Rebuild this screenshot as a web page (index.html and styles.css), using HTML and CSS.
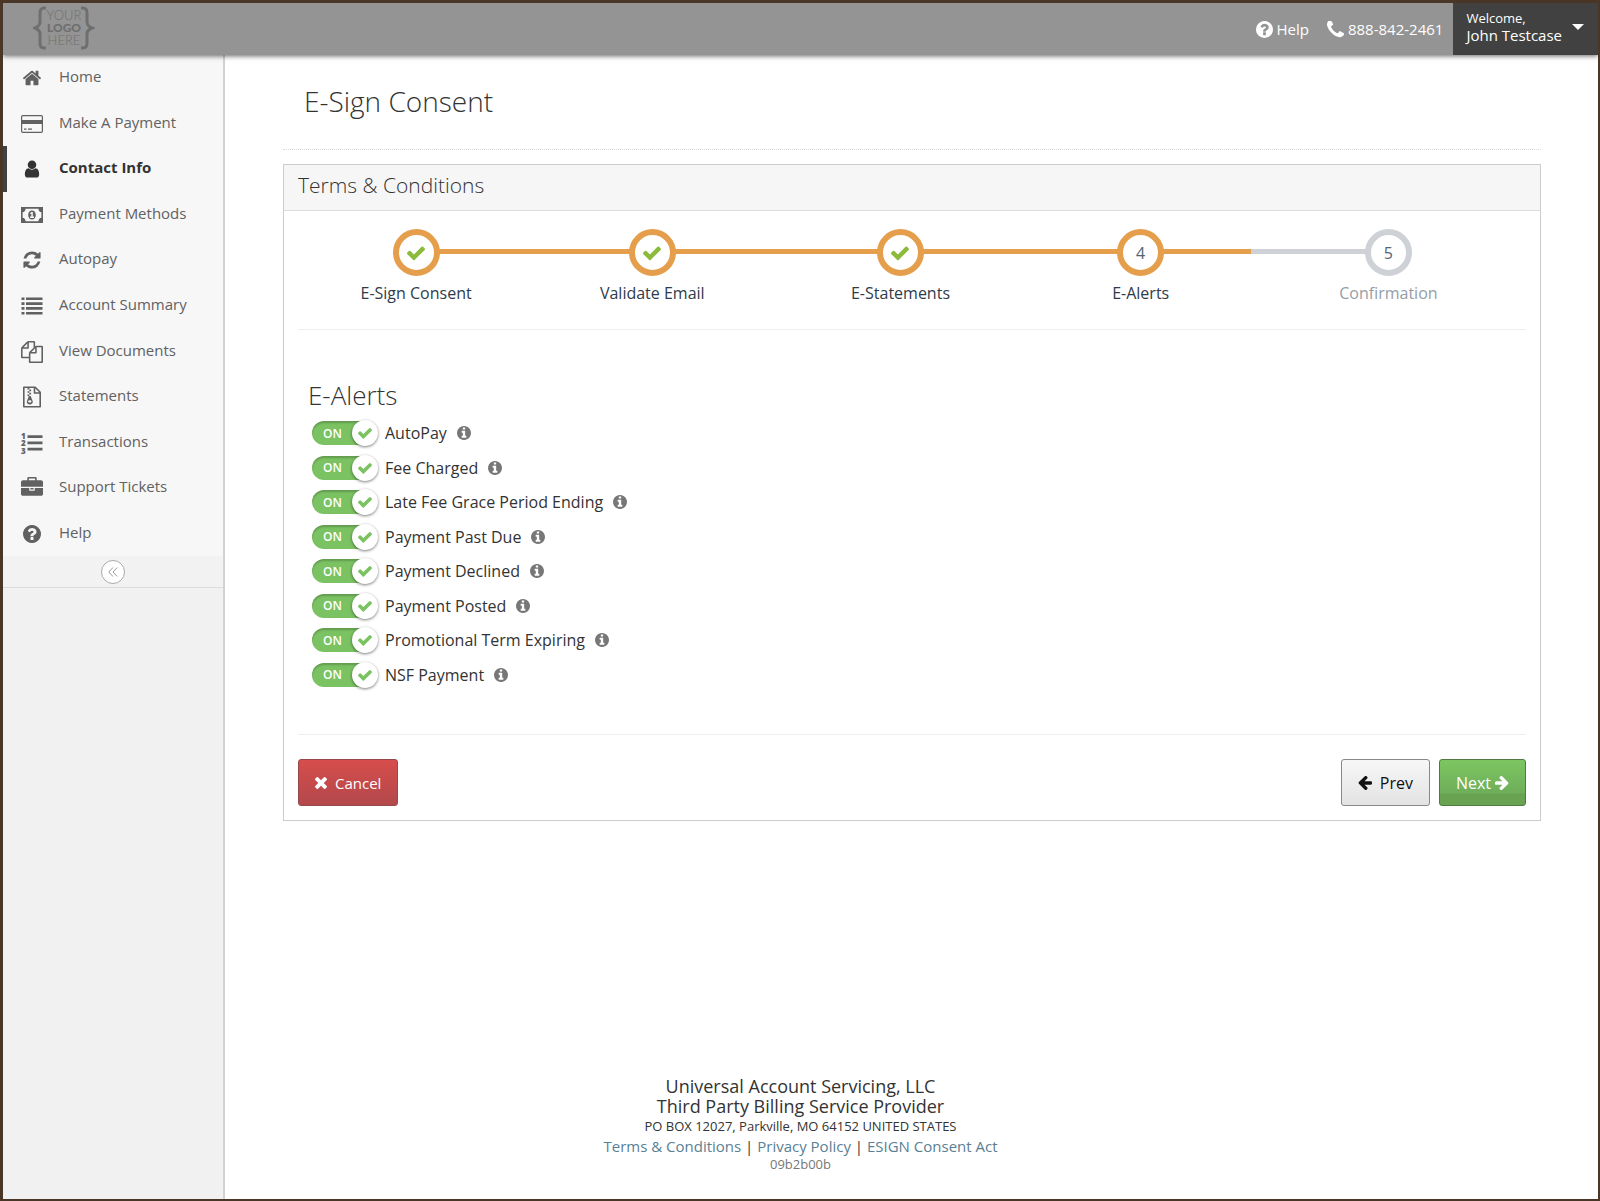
FILE: index.html
```html
<!DOCTYPE html>
<html lang="en">
<head>
  <meta charset="UTF-8">
  <meta name="viewport" content="width=device-width, initial-scale=1.0">
  <title>E-Sign Consent</title>
  <link rel="stylesheet" href="styles.css">
</head>
<body>
  <!-- icon sprite -->
  <svg class="sprite" aria-hidden="true">
    <symbol id="i-home" viewBox="0 0 1792 1792"><path d="M1472 992v480q0 26-19 45t-45 19h-384v-384h-256v384h-384q-26 0-45-19t-19-45v-480q0-1 .5-3t.5-3l575-474 575 474q1 2 1 6zm223-69l-62 74q-8 9-21 11h-3q-13 0-21-7l-692-577-692 577q-12 8-24 7-13-2-21-11l-62-74q-8-10-7-23.5t11-21.5l719-599q32-26 76-26t76 26l244 204v-195q0-14 9-23t23-9h192q14 0 23 9t9 23v408l219 182q10 8 11 21.5t-7 23.5z"/></symbol>
    <symbol id="i-card" viewBox="0 0 24 24"><rect x="1.6" y="3.6" width="20.8" height="16.8" rx="1.2" fill="none" stroke="currentColor" stroke-width="1.2"/><path d="M1 8h22v4H1zM4 16.5h2.5v1.3H4zM8 16.5h4v1.3H8z"/></symbol>
    <symbol id="i-user" viewBox="0 0 1792 1792"><path d="M1536 1399q0 109-62.5 187t-150.5 78h-854q-88 0-150.5-78t-62.5-187q0-85 8.500-160.500t31.500-152 58.500-131 94-89 134.500-34.500q131 128 313 128t313-128q76 0 134.500 34.500t94 89 58.500 131 31.500 152 8.500 160.500zm-256-887q0 159-112.500 271.500t-271.500 112.500-271.500-112.500-112.500-271.500 112.500-271.500 271.500-112.500 271.500 112.500 112.500 271.500z"/></symbol>
    <symbol id="i-money" viewBox="0 0 24 24"><path fill-rule="evenodd" d="M1 4h22v16H1zM5.600 5.700Q5.200 8.800 2.600 9.200V14.800Q5.200 15.200 5.600 18.300H18.400Q18.800 15.200 21.400 14.800V9.200Q18.800 8.800 18.400 5.700z"/><path fill-rule="evenodd" d="M12 7.500c2.400 0 3.800 2 3.800 4.500s-1.400 4.500-3.800 4.500-3.800-2-3.800-4.500 1.400-4.500 3.800-4.500zM11.400 9L9.900 10.300l.7.800.7-.5v3h-1.200V15h3.900v-1.400h-1.200V9z"/></symbol>
    <symbol id="i-refresh" viewBox="0 0 1792 1792"><path d="M1639 1056q0 5-1 7-64 268-268 434.500t-478 166.500q-146 0-282.500-55t-243.500-157l-129 129q-19 19-45 19t-45-19-19-45v-448q0-26 19-45t45-19h448q26 0 45 19t19 45-19 45l-137 137q71 66 161 102t187 36q134 0 250-65t186-179q11-17 53-117 8-23 30-23h192q13 0 22.500 9.500t9.500 22.500zm25-800v448q0 26-19 45t-45 19h-448q-26 0-45-19t-19-45 19-45l138-138q-148-137-349-137-134 0-250 65t-186 179q-11 17-53 117-8 23-30 23h-199q-13 0-22.500-9.500t-9.500-22.500v-7q65-268 270-434.500t480-166.500q146 0 284 55.500t245 156.500l130-129q19-19 45-19t45 19 19 45z"/></symbol>
    <symbol id="i-list" viewBox="0 0 24 24"><path d="M1.500 3.500h3v2.600h-3zM6 3.500h16.500v2.600H6zM1.500 8.300h3v2.600h-3zM6 8.300h16.500v2.600H6zM1.500 13.100h3v2.600h-3zM6 13.100h16.500v2.600H6zM1.500 17.900h3v2.600h-3zM6 17.900h16.500v2.600H6z"/></symbol>
    <symbol id="i-files" viewBox="0 0 1792 1792"><path d="M1696 384q40 0 68 28t28 68v1216q0 40-28 68t-68 28h-960q-40 0-68-28t-28-68v-288h-544q-40 0-68-28t-28-68v-672q0-40 20-88t48-76l408-408q28-28 76-48t88-20h416q40 0 68 28t28 68v328q68-40 128-40h416zm-544 213l-299 299h299v-299zm-640-384l-299 299h299v-299zm196 647l316-316v-416h-384v416q0 40-28 68t-68 28h-416v640h512v-256q0-40 20-88t48-76zm956 804v-1152h-384v416q0 40-28 68t-68 28h-416v640h896z"/></symbol>
    <symbol id="i-zip" viewBox="0 0 24 24"><path fill="none" stroke="currentColor" stroke-width="1.600" stroke-linejoin="round" d="M3.800 2.300h11.400l5 5v14.400H3.800zM14.500 2.500v5.500h5.500"/><path fill-rule="evenodd" d="M7.500 3h1.800v1.600H7.500zM9.300 4.600h1.800v1.600H9.300zM7.500 6.200h1.800v1.600H7.500zM9.300 7.800h1.800v1.600H9.300zM7.500 9.400h1.800V11H7.500zM8.800 11h1.900l2 5.200c.6 1.900-1 3.200-2.900 3.200s-3.500-1.300-2.900-3.200zM9.800 15.300c-1 0-1.700.5-1.700 1.100s.7 1.100 1.700 1.100 1.700-.5 1.700-1.100-.7-1.100-1.700-1.100z"/></symbol>
    <symbol id="i-ol" viewBox="0 0 24 24"><path d="M7.500 4.200h15v2.700h-15zM7.500 10.500h15v2.700h-15zM7.500 16.800h15v2.700h-15z"/><g class="ol-num"><text x="1" y="7.500">1</text><text x="1" y="15">2</text><text x="1" y="22.500">3</text></g></symbol>
    <symbol id="i-briefcase" viewBox="0 0 1792 1792"><path d="M640 256h512v-128h-512v128zm1152 640v480q0 66-47 113t-113 47h-1472q-66 0-113-47t-47-113v-480h672v160q0 26 19 45t45 19h320q26 0 45-19t19-45v-160h672zm-768 0v128h-256v-128h256zm768-480v384h-1792v-384q0-66 47-113t113-47h352v-160q0-40 28-68t68-28h576q40 0 68 28t28 68v160h352q66 0 113 47t47 113z"/></symbol>
    <symbol id="i-question" viewBox="128 128 1536 1536"><path d="M1024 1376v-192q0-14-9-23t-23-9h-192q-14 0-23 9t-9 23v192q0 14 9 23t23 9h192q14 0 23-9t9-23zm256-672q0-88-55.500-163t-138.500-116-170-41q-243 0-371 213-15 24 8 42l132 100q7 6 19 6 16 0 25-12 53-68 86-92 34-24 86-24 48 0 85.500 26t37.500 59q0 38-20 61t-68 45q-63 28-115.500 86.500t-52.500 125.500v36q0 14 9 23t23 9h192q14 0 23-9t9-23q0-19 21.500-49.500t54.500-49.500q32-18 49-28.500t46-35 44.500-48 28-60.500 12.500-81zm384 192q0 209-103 385.500t-279.500 279.500-385.500 103-385.500-103-279.500-279.500-103-385.500 103-385.500 279.500-279.500 385.500-103 385.500 103 279.500 279.500 103 385.500z"/></symbol>
    <symbol id="i-info" viewBox="128 128 1536 1536"><path d="M1152 1376v-160q0-14-9-23t-23-9h-96v-512q0-14-9-23t-23-9h-320q-14 0-23 9t-9 23v160q0 14 9 23t23 9h96v320h-96q-14 0-23 9t-9 23v160q0 14 9 23t23 9h448q14 0 23-9t9-23zm-128-896v-160q0-14-9-23t-23-9h-192q-14 0-23 9t-9 23v160q0 14 9 23t23 9h192q14 0 23-9t9-23zm640 416q0 209-103 385.500t-279.500 279.500-385.500 103-385.500-103-279.500-279.500-103-385.500 103-385.500 279.500-279.500 385.500-103 385.500 103 279.500 279.500 103 385.500z"/></symbol>
    <symbol id="i-phone" viewBox="192 192 1408 1408"><path d="M1600 1240q0 27-10 70.500t-21 68.500q-21 50-122 106-94 51-186 51-27 0-52.500-3.500t-57.500-12.500-47.500-14.500-55.500-20.500-49-18q-98-35-175-83-128-79-264.500-215.500t-215.500-264.500q-48-77-83-175-3-9-18-49t-20.500-55.500-14.500-47.500-12.500-57.500-3.500-52.500q0-92 51-186 56-101 106-122 25-11 68.500-21t70.500-10q14 0 21 3 18 6 53 76 11 19 30 54t35 63.500 31 53.500q3 4 17.500 25t21.500 35.500 7 28.500q0 20-28.500 50t-62 55-62 53-28.500 46q0 9 5 22.500t8.500 20.500 14 24 11.500 19q76 137 174 235t235 174q2 1 19 11.500t24 14 20.500 8.500 22.500 5q18 0 46-28.500t53-62 55-62 50-28.500q14 0 28.500 7t35.500 21.500 25 17.500q25 15 53.500 31t63.500 35 54 30q70 35 76 53 3 7 3 21z"/></symbol>
    <symbol id="i-check" viewBox="121 121 1550 1550"><path d="M1671 566q0 40-28 68l-724 724-136 136q-28 28-68 28t-68-28l-136-136-362-362q-28-28-28-68t28-68l136-136q28-28 68-28t68 28l294 295 656-657q28-28 68-28t68 28l136 136q28 28 28 68z"/></symbol>
    <symbol id="i-times" viewBox="302 366 1188 1188"><path d="M1490 1322q0 40-28 68l-136 136q-28 28-68 28t-68-28l-294-294-294 294q-28 28-68 28t-68-28l-136-136q-28-28-28-68t28-68l294-294-294-294q-28-28-28-68t28-68l136-136q28-28 68-28t68 28l294 294 294-294q28-28 68-28t68 28l136 136q28 28 28 68t-28 68l-294 294 294 294q28 28 28 68z"/></symbol>
    <symbol id="i-arrow" viewBox="128 200 1536 1536"><path d="M1664 896v128q0 53-32.500 90.500t-84.500 37.500h-704l293 294q38 36 38 90t-38 90l-75 76q-37 37-90 37-52 0-91-37l-651-652q-37-37-37-90 0-52 37-91l651-650q38-38 91-38 52 0 90 38l75 74q38 38 38 91t-38 91l-293 293h704q52 0 84.500 37.500t32.500 90.500z"/></symbol>
  </svg>

  <header class="topbar">
    <a class="logo" href="#" aria-label="Home page">
      <svg width="62" height="44" viewBox="0 0 62 44">
        <path class="brace" d="M13 2H11Q7 2 7 7V16Q7 20 2 22Q7 24 7 28V37Q7 42 11 42H13M48 2H50Q54 2 54 7V16Q54 20 59 22Q54 24 54 28V37Q54 42 50 42H48"/>
        <text class="logo-thin" x="31" y="14">YOUR</text>
        <text class="logo-bold" x="31" y="26">LOGO</text>
        <text class="logo-thin" x="31" y="39">HERE</text>
      </svg>
    </a>
    <div class="topbar-right">
      <a class="top-link" href="#"><svg class="icon"><use href="#i-question"/></svg>Help</a>
      <a class="top-link" href="#"><svg class="icon phone"><use href="#i-phone"/></svg>888-842-2461</a>
      <button class="user-menu" type="button">
        <span class="user-name"><small>Welcome,</small>John Testcase</span>
        <span class="caret"></span>
      </button>
    </div>
  </header>

  <div class="page">
    <aside class="sidebar">
      <nav class="menu">
        <a href="#"><svg class="medium"><use href="#i-home"/></svg>Home</a>
        <a href="#"><svg><use href="#i-card"/></svg>Make A Payment</a>
        <a href="#" class="active"><svg class="medium"><use href="#i-user"/></svg>Contact Info</a>
        <a href="#"><svg><use href="#i-money"/></svg>Payment Methods</a>
        <a href="#"><svg class="medium"><use href="#i-refresh"/></svg>Autopay</a>
        <a href="#"><svg><use href="#i-list"/></svg>Account Summary</a>
        <a href="#"><svg class="small"><use href="#i-files"/></svg>View Documents</a>
        <a href="#"><svg><use href="#i-zip"/></svg>Statements</a>
        <a href="#"><svg><use href="#i-ol"/></svg>Transactions</a>
        <a href="#"><svg class="small"><use href="#i-briefcase"/></svg>Support Tickets</a>
        <a href="#"><svg class="round"><use href="#i-question"/></svg>Help</a>
      </nav>
      <div class="collapse-bar">
        <button class="collapse" type="button" aria-label="Collapse menu">
          <svg width="10" height="10" viewBox="0 0 10 10"><path d="M5 .5L.8 5 5 9.500M9.200 .5L5 5l4.200 4.500"/></svg>
        </button>
      </div>
    </aside>

    <main class="content">
      <h1>E-Sign Consent</h1>

      <section class="panel">
        <h2 class="panel-title">Terms &amp; Conditions</h2>
        <div class="panel-body">
          <ol class="steps">
            <li class="done"><span class="step"><svg><use href="#i-check"/></svg></span>E-Sign Consent</li>
            <li class="done"><span class="step"><svg><use href="#i-check"/></svg></span>Validate Email</li>
            <li class="done"><span class="step"><svg><use href="#i-check"/></svg></span>E-Statements</li>
            <li class="done"><span class="step">4</span>E-Alerts</li>
            <li><span class="step">5</span>Confirmation</li>
          </ol>

          <form class="alerts">
            <h3>E-Alerts</h3>
            <div class="alert-list">
              <div class="alert-row">
                <span class="switch"><input type="checkbox" id="autopay" checked><span class="on">ON</span><span class="knob"><svg><use href="#i-check"/></svg></span></span>
                <label for="autopay">AutoPay</label><svg class="info"><use href="#i-info"/></svg>
              </div>
              <div class="alert-row">
                <span class="switch"><input type="checkbox" id="fee" checked><span class="on">ON</span><span class="knob"><svg><use href="#i-check"/></svg></span></span>
                <label for="fee">Fee Charged</label><svg class="info"><use href="#i-info"/></svg>
              </div>
              <div class="alert-row">
                <span class="switch"><input type="checkbox" id="grace" checked><span class="on">ON</span><span class="knob"><svg><use href="#i-check"/></svg></span></span>
                <label for="grace">Late Fee Grace Period Ending</label><svg class="info"><use href="#i-info"/></svg>
              </div>
              <div class="alert-row">
                <span class="switch"><input type="checkbox" id="pastdue" checked><span class="on">ON</span><span class="knob"><svg><use href="#i-check"/></svg></span></span>
                <label for="pastdue">Payment Past Due</label><svg class="info"><use href="#i-info"/></svg>
              </div>
              <div class="alert-row">
                <span class="switch"><input type="checkbox" id="declined" checked><span class="on">ON</span><span class="knob"><svg><use href="#i-check"/></svg></span></span>
                <label for="declined">Payment Declined</label><svg class="info"><use href="#i-info"/></svg>
              </div>
              <div class="alert-row">
                <span class="switch"><input type="checkbox" id="posted" checked><span class="on">ON</span><span class="knob"><svg><use href="#i-check"/></svg></span></span>
                <label for="posted">Payment Posted</label><svg class="info"><use href="#i-info"/></svg>
              </div>
              <div class="alert-row">
                <span class="switch"><input type="checkbox" id="promo" checked><span class="on">ON</span><span class="knob"><svg><use href="#i-check"/></svg></span></span>
                <label for="promo">Promotional Term Expiring</label><svg class="info"><use href="#i-info"/></svg>
              </div>
              <div class="alert-row">
                <span class="switch"><input type="checkbox" id="nsf" checked><span class="on">ON</span><span class="knob"><svg><use href="#i-check"/></svg></span></span>
                <label for="nsf">NSF Payment</label><svg class="info"><use href="#i-info"/></svg>
              </div>
            </div>
          </form>

          <div class="actions">
            <button class="btn cancel" type="button"><svg><use href="#i-times"/></svg>Cancel</button>
            <button class="btn prev" type="button"><svg><use href="#i-arrow"/></svg>Prev</button>
            <button class="btn next" type="button">Next<svg><use href="#i-arrow"/></svg></button>
          </div>
        </div>
      </section>
    </main>

    <footer class="footer">
      <p class="company">Universal Account Servicing, LLC<br>Third Party Billing Service Provider</p>
      <p class="address">PO BOX 12027, Parkville, MO 64152 UNITED STATES</p>
      <p class="links"><a href="#">Terms &amp; Conditions</a> | <a href="#">Privacy Policy</a> | <a href="#">ESIGN Consent Act</a></p>
      <p class="build">09b2b00b</p>
    </footer>
  </div>
</body>
</html>
```
FILE: styles.css
```css
* {
  box-sizing: border-box;
}

body {
  margin: 0;
  min-height: 100vh;
  display: flex;
  flex-direction: column;
  border: 2px solid #4a3627;
  border-top-width: 3px;
  border-left-width: 3px;
  font-family: "Open Sans", "Noto Sans", sans-serif;
  font-size: 16px;
  color: #333;
  background: #fff;
}

h1, h2, h3, p, ol {
  margin: 0;
  padding: 0;
  font-weight: 300;
}

a {
  color: inherit;
  text-decoration: none;
}

button {
  font-family: inherit;
  cursor: pointer;
}

svg {
  fill: currentColor;
  flex: none;
}

.sprite {
  display: none;
}

/* top bar */
.topbar {
  position: relative;
  z-index: 2;
  height: 52px;
  display: flex;
  justify-content: space-between;
  background: #949494;
  box-shadow: 0 1px 5px rgba(0, 0, 0, 0.6);
}

.logo {
  padding: 3px 0 0 30px;
  color: #6f6f6f;
}

.brace {
  fill: none;
  stroke: currentColor;
  stroke-width: 3;
}

.logo-thin,
.logo-bold {
  font-family: Lato, sans-serif;
  font-size: 13px;
  font-weight: 300;
  text-anchor: middle;
}

.logo-bold {
  font-size: 12px;
  font-weight: 900;
}

.topbar-right {
  display: flex;
  align-items: center;
  color: #fff;
}

.top-link {
  display: flex;
  align-items: center;
  gap: 4px;
  margin-right: 18px;
  font-size: 15px;
}

.top-link + .top-link {
  margin-right: 10px;
}

.top-link .icon {
  width: 17px;
  height: 17px;
}

.user-menu {
  align-self: stretch;
  display: flex;
  align-items: center;
  gap: 10px;
  padding: 0 14px 4px 13px;
  border: 0;
  background: #414141;
  color: #fff;
  font-size: 15px;
  line-height: 18px;
  text-align: left;
}

.user-name small {
  display: block;
  font-size: 13px;
  line-height: 16px;
}

.caret {
  border: 6px solid transparent;
  border-top-color: #fff;
  border-bottom: 0;
}

/* page grid: the footer runs below both columns */
.page {
  flex: 1;
  display: grid;
  grid-template-columns: 222px 1fr;
  grid-template-rows: 1fr auto;
}

.sidebar {
  grid-column: 1;
  grid-row: 1 / 3;
  background: #f1f1f1;
  border-right: 2px solid #d2d2d2;
}

.menu {
  height: 501px;
  display: grid;
  grid-auto-rows: 1fr;
  background: #f7f7f7;
}

.menu a {
  display: flex;
  align-items: center;
  gap: 15px;
  padding: 0 0 3px 17px;
  font-size: 15px;
  color: #616161;
}

.menu svg {
  width: 24px;
  height: 24px;
  margin: 4px 0 0;
}

.menu svg.medium {
  width: 20px;
  height: 20px;
  margin: 4px 2px 0;
}

.menu svg.small {
  width: 22px;
  height: 22px;
  margin: 4px 1px 0;
}

.menu svg.round {
  width: 18px;
  height: 18px;
  margin: 4px 3px 0;
}

.menu .active {
  padding-left: 13px;
  border-left: 4px solid #414141;
  color: #333;
  font-weight: 700;
}

.ol-num {
  font-family: "Open Sans", sans-serif;
  font-size: 8px;
  font-weight: 800;
}

.collapse-bar {
  height: 32px;
  display: flex;
  align-items: center;
  justify-content: center;
  border-bottom: 1px solid #dcdcdc;
  background: #f2f2f2;
}

.collapse {
  width: 24px;
  height: 24px;
  padding: 0;
  display: flex;
  align-items: center;
  justify-content: center;
  border: 1px solid #aaa;
  border-radius: 50%;
  background: #fff;
  color: #999;
}

.collapse path {
  fill: none;
  stroke: currentColor;
}

/* content */
.content {
  grid-column: 2;
  grid-row: 1;
  padding: 0 57px 0 58px;
}

.content h1 {
  height: 95px;
  padding: 26px 21px 0;
  border-bottom: 1px dotted #d8d8d8;
  font-size: 28px;
  line-height: 40px;
}

.panel {
  margin-top: 14px;
  border: 1px solid #ccc;
}

.panel-title {
  padding: 0 14px 4px;
  border-bottom: 1px solid #ddd;
  background: #f6f6f6;
  font-size: 21px;
  line-height: 41px;
}

.panel-body {
  padding: 18px 14px 14px;
}

.steps {
  display: grid;
  grid-template-columns: 236fr 236fr 260fr 220fr 275fr;
  padding-bottom: 24px;
  border-bottom: 1px solid #eee;
  list-style: none;
}

.steps li {
  position: relative;
  display: flex;
  flex-direction: column;
  align-items: center;
  gap: 5px;
  font-weight: 400;
  line-height: 24px;
  color: #949ea7;
}

.steps li.done {
  color: #2f3b4b;
}

/* line behind the circles */
.steps li::before {
  content: "";
  position: absolute;
  top: 20px;
  left: 0;
  right: 0;
  height: 5px;
  background: #ced1d6;
}

.steps li.done::before {
  background: #e59f4c;
}

.steps li:first-child::before {
  left: 50%;
}

.steps li:last-child::before {
  right: 50%;
}

.step {
  position: relative;
  width: 47px;
  height: 47px;
  display: flex;
  align-items: center;
  justify-content: center;
  border: 6px solid #ced1d6;
  border-radius: 50%;
  background: #fff;
  color: #546474;
}

.done .step {
  border-color: #e59f4c;
}

.step svg {
  width: 18px;
  height: 18px;
  color: #8cba3c;
}

.alerts {
  padding: 48px 10px 42px;
  border-bottom: 1px solid #eee;
}

.alerts h3 {
  padding-bottom: 4px;
  font-size: 26px;
  line-height: 34px;
}

.alert-list {
  height: 276px;
  display: grid;
  grid-auto-rows: 1fr;
  padding-left: 4px;
}

.alert-row {
  display: flex;
  align-items: center;
}

.switch {
  position: relative;
  width: 66px;
  height: 26px;
  display: flex;
  align-items: center;
  margin-right: 7px;
}

.switch input {
  appearance: none;
  width: 62px;
  height: 24px;
  margin: 0;
  border-radius: 12px;
  background: #7bc262;
  box-shadow: inset 0 2px 2px rgba(0, 0, 0, 0.2);
}

.on {
  position: absolute;
  left: 11px;
  font-size: 12px;
  font-weight: 600;
  color: #fff;
  pointer-events: none;
}

.knob {
  position: absolute;
  right: 0;
  width: 26px;
  height: 26px;
  display: flex;
  align-items: center;
  justify-content: center;
  border-radius: 50%;
  background: #fff;
  color: #7bc262;
  box-shadow: 0 1px 3px rgba(0, 0, 0, 0.5);
  pointer-events: none;
}

.knob svg {
  width: 14px;
  height: 14px;
}

.info {
  width: 14px;
  height: 14px;
  margin-left: 10px;
  color: #777;
}

.actions {
  display: flex;
  gap: 9px;
  padding-top: 24px;
}

.btn {
  height: 47px;
  display: flex;
  align-items: center;
  gap: 8px;
  padding: 0 16px;
  border: 1px solid #888;
  border-radius: 3px;
  font-size: 16px;
}

.btn svg {
  width: 14px;
  height: 14px;
}

.cancel {
  margin-right: auto;
  border-color: #97484a;
  background: linear-gradient(#d64d4c, #b3484b);
  color: #fff;
  font-size: 15px;
}

.cancel svg {
  width: 12px;
  height: 12px;
}

.prev {
  background: linear-gradient(#f7f7f7, #e3e3e3);
  color: #111;
}

.next {
  gap: 4px;
  border-color: #4f7a42;
  background: linear-gradient(#7cc662, #6fae5a 73%, #69a352 75%);
  color: #fff;
}

.next svg {
  transform: rotate(180deg);
}

/* footer */
.footer {
  grid-column: 1 / 3;
  grid-row: 2;
  padding-bottom: 26px;
  text-align: center;
}

.footer p {
  font-weight: 400;
}

.footer .company {
  font-size: 18px;
  line-height: 20px;
}

.footer .address {
  font-size: 13px;
  line-height: 21px;
}

.footer .links {
  font-size: 15px;
  line-height: 18px;
}

.footer .links a {
  color: #5a8092;
}

.footer .build {
  font-size: 13px;
  line-height: 18px;
  color: #777;
}
```
